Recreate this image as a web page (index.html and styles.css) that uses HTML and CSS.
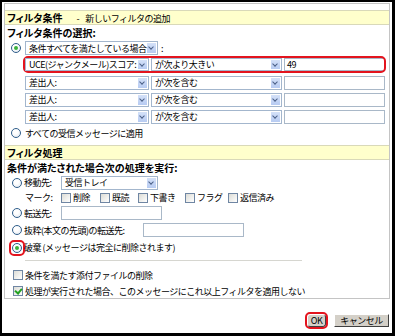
FILE: index.html
```html
<!DOCTYPE html>
<html lang="ja">
<head>
    <meta charset="UTF-8">
    <title>フィルタ条件</title>
    <link rel="stylesheet" href="styles.css">
</head>
<body>
    <div class="panel">
        <div class="band"><b>フィルタ条件</b><span class="dash">-</span>新しいフィルタの追加</div>
        <div class="title">フィルタ条件の選択:</div>
        <div class="row first">
            <span class="radio on"></span>
            <span class="select w-all">条件すべてを満たしている場合<i class="drop"></i></span>
            <span class="colon">:</span>
        </div>
        <div class="cond hl">
            <span class="select w-field">UCE(ジャンクメール)スコア:<i class="drop"></i></span>
            <span class="select w-op">が次より大きい<i class="drop"></i></span>
            <span class="input w-val">49</span>
        </div>
        <div class="cond">
            <span class="select w-field">差出人:<i class="drop"></i></span>
            <span class="select w-op">が次を含む<i class="drop"></i></span>
            <span class="input w-val"></span>
        </div>
        <div class="cond">
            <span class="select w-field">差出人:<i class="drop"></i></span>
            <span class="select w-op">が次を含む<i class="drop"></i></span>
            <span class="input w-val"></span>
        </div>
        <div class="cond">
            <span class="select w-field">差出人:<i class="drop"></i></span>
            <span class="select w-op">が次を含む<i class="drop"></i></span>
            <span class="input w-val"></span>
        </div>
        <div class="row all">
            <span class="radio"></span>すべての受信メッセージに適用
        </div>

        <div class="band"><b>フィルタ処理</b></div>
        <div class="title">条件が満たされた場合次の処理を実行:</div>
        <div class="row act r-move">
            <span class="radio"></span><span class="lbl">移動先:</span>
            <span class="select w-folder">受信トレイ<i class="drop"></i></span>
        </div>
        <div class="row marks">
            <span class="mark">マーク:</span>
            <span class="mk k1"><span class="check"></span>削除</span>
            <span class="mk k2"><span class="check"></span>既読</span>
            <span class="mk k3"><span class="check"></span>下書き</span>
            <span class="mk k4"><span class="check"></span>フラグ</span>
            <span class="mk"><span class="check"></span>返信済み</span>
        </div>
        <div class="row act r-fwd">
            <span class="radio"></span><span class="lbl">転送先:</span>
            <span class="input w-fwd"></span>
        </div>
        <div class="row act r-part">
            <span class="radio"></span><span class="lbl wide">抜粋(本文の先頭)の転送先:</span>
            <span class="input w-fwd"></span>
        </div>
        <div class="row act r-drop">
            <span class="hl-box"><span class="radio on"></span></span><span>破棄 (メッセージは完全に削除されます)</span>
        </div>
        <hr class="sep">
        <div class="row opt">
            <span class="check"></span>条件を満たす添付ファイルの削除
        </div>
        <div class="row opt">
            <span class="check on"></span>処理が実行された場合、このメッセージにこれ以上フィルタを適用しない
        </div>
    </div>
    <div class="buttons">
        <button type="button" class="btn ok hl">OK</button>
        <button type="button" class="btn cancel">キャンセル</button>
    </div>
</body>
</html>
```

FILE: styles.css
```css
body {
    margin: 0;
    width: 395px;
    height: 336px;
    box-sizing: border-box;
    border-style: solid;
    border-color: #000;
    border-width: 2px 3px 3px 2px;
    background-color: #fff;
    font-family: "Noto Sans CJK JP", sans-serif;
    font-size: 9px;
    line-height: 13px;
    letter-spacing: -0.5px;
    color: #000;
}

b,
.title {
    font-size: 10px;
    font-weight: bold;
    font-feature-settings: "palt";
    letter-spacing: 0;
}

.panel {
    margin: 1px 2px 0 2px;
    height: 296px;
    box-sizing: border-box;
    border: 1px solid #c4c4c4;
    padding-top: 6px;
}

.band {
    height: 13px;
    background-color: #ffffcc;
    border-top: 1px solid #d9d9b9;
    border-bottom: 1px solid #d9d9b9;
    padding-left: 2px;
}

.dash {
    margin: 0 6px 0 14px;
}

.title {
    height: 15px;
    line-height: 15px;
    padding-left: 2px;
}

.row {
    display: flex;
    align-items: center;
    height: 17px;
}

.row.first {
    height: 16px;
}

.radio {
    width: 10px;
    height: 10px;
    box-sizing: border-box;
    border: 1px solid #2f5d8a;
    border-radius: 50%;
    background: radial-gradient(circle at 40% 35%, #fff 30%, #dfe6ee 100%);
    margin: 0 4px 0 6px;
    flex: none;
    position: relative;
}

.radio.on::after {
    content: "";
    position: absolute;
    left: 2px;
    top: 2px;
    width: 4px;
    height: 4px;
    border-radius: 50%;
    background-color: #3cb23c;
}

.select,
.input {
    display: flex;
    align-items: center;
    height: 14px;
    box-sizing: border-box;
    border: 1px solid #a3b6cd;
    background-color: #fff;
    padding-left: 3px;
    flex: none;
    white-space: nowrap;
    overflow: hidden;
}

.input {
    border-color: #a9b8c8;
    padding-left: 2px;
}

.select {
    position: relative;
}

.drop {
    position: absolute;
    right: 1px;
    top: 1px;
    width: 9px;
    height: 10px;
    background: linear-gradient(#d4e1f8, #b7cbf2);
}

.drop::after {
    content: "";
    position: absolute;
    left: 2px;
    top: 2px;
    width: 3px;
    height: 3px;
    border-right: 1.5px solid #4a5f86;
    border-bottom: 1.5px solid #4a5f86;
    transform: rotate(45deg);
}

.w-all { width: 133px; }
.w-field { width: 124px; margin-left: 20px; }
.w-op { width: 131px; margin-left: 2px; }
.w-val { width: 101px; margin-left: 2px; }
.w-folder { width: 97px; }
.w-fwd { width: 101px; }

.colon {
    margin-left: 3px;
}

.cond {
    display: flex;
    align-items: center;
    height: 17px;
}

.hl,
.hl-box {
    outline: 2px solid #e3141e;
    border-radius: 3px;
}

.cond.hl {
    width: 359px;
    height: 13px;
    margin: 2px 0 3px 20px;
}

.cond.hl .w-field {
    margin-left: 0;
}

.cond.hl .select,
.cond.hl .input {
    height: 13px;
}

.cond.hl .drop {
    height: 9px;
}

.all {
    height: 14px;
    margin-top: 1px;
    margin-bottom: 5px;
}

.act .radio {
    margin: 0 2px 0 7px;
}

.hl-box {
    display: flex;
    padding: 1px;
    margin: 0 1px 0 6px;
}

.hl-box .radio {
    margin: 0;
}

.lbl {
    width: 37px;
}

.lbl.wide {
    width: 119px;
}

.r-move,
.marks {
    height: 15px;
}

.r-fwd {
    height: 16px;
}

.r-part {
    height: 18px;
}

.mark {
    margin-left: 20px;
    width: 36px;
}

.mk {
    display: flex;
    align-items: center;
}

.k1 { width: 39px; }
.k2 { width: 38px; }
.k3 { width: 47px; }
.k4 { width: 43px; }

.check {
    width: 10px;
    height: 10px;
    box-sizing: border-box;
    border: 1px solid #6f86a3;
    background: linear-gradient(135deg, #dcdcd6, #fff);
    margin-right: 2px;
    flex: none;
    position: relative;
}

.check.on::after {
    content: "";
    position: absolute;
    left: 2px;
    top: 0;
    width: 3px;
    height: 5px;
    border-right: 2px solid #21a121;
    border-bottom: 2px solid #21a121;
    transform: rotate(40deg);
}

.sep {
    width: 277px;
    margin: 4px 0 5px 20px;
    border: none;
    border-top: 1px solid #d6d6d0;
    border-bottom: 1px solid #fff;
}

.opt {
    height: 16px;
}

.opt .check {
    margin-left: 8px;
}

.buttons {
    display: flex;
    justify-content: flex-end;
    gap: 6px;
    margin: 15px 3px 0 0;
}

.btn {
    height: 13px;
    padding: 0;
    font-family: inherit;
    font-size: 9px;
    line-height: 11px;
    letter-spacing: -0.5px;
    background-color: #d4d0c8;
    border: 1px solid;
    border-color: #fff #404040 #404040 #fff;
    color: #000;
}

.ok {
    width: 19px;
    margin-right: 2px;
}

.cancel {
    width: 55px;
}
```
